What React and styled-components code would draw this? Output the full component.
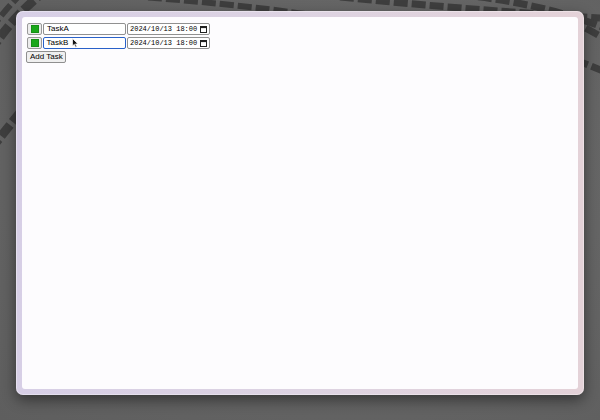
import React from "react";
import styled, { createGlobalStyle } from "styled-components";

const Global = createGlobalStyle`
  html, body { margin: 0; padding: 0; }
  body { font-family: "Liberation Sans", Arial, sans-serif; background: #646464; }
`;

const Desktop = styled.div`
  position: relative;
  width: 600px;
  height: 420px;
  overflow: hidden;
  box-sizing: border-box;
  padding: 11px 0 0 16px;
  background: radial-gradient(ellipse at 60% 40%, #6e6e6e 0%, #646464 55%, #5e5e5e 100%);
`;

const Wallpaper = styled.svg`
  position: absolute;
  inset: 0;
  width: 600px;
  height: 420px;
`;

const Window = styled.div`
  position: relative;
  width: 568px;
  height: 384px;
  box-sizing: border-box;
  padding: 6px;
  border-radius: 7px;
  background: linear-gradient(90deg, #d7cfe6 0%, #ddd3e2 50%, #e4d2d8 100%);
  box-shadow: 0 5px 14px rgba(0, 0, 0, 0.45), inset 0 0 0 1px rgba(255,255,255,0.35);
`;

const Content = styled.div`
  width: 100%;
  height: 100%;
  box-sizing: border-box;
  background: #fdfcfe;
  border-radius: 3px;
  padding: 6px 4px;
  display: flex;
  flex-direction: column;
  gap: 2px;
  align-items: flex-start;
`;

const Row = styled.div`
  display: flex;
  align-items: center;
  gap: 1px;
  padding-left: 1px;
`;

const ColorBox = styled.div`
  width: 15px;
  height: 12px;
  box-sizing: border-box;
  border: 1px solid #9a9a9a;
  border-radius: 2px;
  background: #ececec;
  display: flex;
  align-items: center;
  justify-content: center;
`;

const Swatch = styled.div`
  width: 8px;
  height: 8px;
  background: ${(p) => p.color};
  box-shadow: inset 0 0 0 1px rgba(0,0,0,0.15);
`;

const TextField = styled.div`
  position: relative;
  width: 83px;
  height: 12px;
  box-sizing: border-box;
  border: ${(p) => (p.focused ? "1.5px solid #2a62c9" : "1px solid #909090")};
  border-radius: 2px;
  background: #fff;
  font-size: 8px;
  color: #000;
  line-height: 10px;
  padding-left: ${(p) => (p.focused ? "2.5px" : "3px")};
  white-space: nowrap;
`;

const DateField = styled.div`
  width: 83px;
  height: 12px;
  box-sizing: border-box;
  border: 1px solid #909090;
  border-radius: 2px;
  background: #fff;
  display: flex;
  align-items: center;
  justify-content: space-between;
  padding: 0 2px 0 2px;
  font-family: "Liberation Mono", "DejaVu Sans Mono", monospace;
  font-size: 7px;
  color: #000;
`;

const Button = styled.div`
  height: 12px;
  box-sizing: border-box;
  border: 1px solid #8f8f8f;
  border-radius: 2px;
  background: #efefef;
  font-size: 8px;
  line-height: 10px;
  padding: 0 2px 0 3px;
  color: #000;
  white-space: nowrap;
`;

const Cursor = styled.svg`
  position: absolute;
  left: 28px;
  top: 0px;
  width: 7px;
  height: 10px;
`;

const CalendarIcon = () => (
  <svg width="7" height="7" viewBox="0 0 7 7">
    <rect x="0.5" y="0.5" width="6" height="6" fill="none" stroke="#222" strokeWidth="1" />
    <rect x="0.5" y="0.5" width="6" height="1.6" fill="#222" />
  </svg>
);

const tasks = [
  { name: "TaskA", color: "#1aa81a", date: "2024/10/13 18:00", focused: false },
  { name: "TaskB", color: "#1aa81a", date: "2024/10/13 18:00", focused: true },
];

const Stripes = ({ d, width = 9 }) => (
  <path d={d} fill="none" stroke="#3e3e3e" strokeWidth={width} strokeDasharray="14 4" />
);

export default function App() {
  return (
    <>
      <Global />
      <Desktop>
        <Wallpaper viewBox="0 0 600 420">
          <Stripes d="M -10 52 Q 10 20 40 -5" />
          <Stripes d="M -10 30 Q 5 10 20 -5" width={6} />
          <Stripes d="M -10 150 Q 10 125 30 100" />
          <Stripes d="M 130 -4 Q 260 6 330 18" width={6} />
          <Stripes d="M 340 -3 Q 470 10 600 18" width={7} />
          <Stripes d="M 460 -5 Q 540 2 610 30" width={7} />
          <Stripes d="M 570 20 Q 590 30 610 42" width={7} />
          <Stripes d="M 575 60 Q 592 66 610 74" width={7} />
        </Wallpaper>
        <Window>
          <Content>
            {tasks.map((t) => (
              <Row key={t.name}>
                <ColorBox>
                  <Swatch color={t.color} />
                </ColorBox>
                <TextField focused={t.focused}>
                  {t.name}
                  {t.focused && (
                    <Cursor viewBox="0 0 7 10">
                      <path d="M0.5 0.5 L0.5 8 L2.3 6.3 L3.6 9.3 L4.8 8.8 L3.5 5.9 L6 5.9 Z" fill="#111" stroke="#fff" strokeWidth="0.7" />
                    </Cursor>
                  )}
                </TextField>
                <DateField>
                  <span>{t.date}</span>
                  <CalendarIcon />
                </DateField>
              </Row>
            ))}
            <Button>Add Task</Button>
          </Content>
        </Window>
      </Desktop>
    </>
  );
}
